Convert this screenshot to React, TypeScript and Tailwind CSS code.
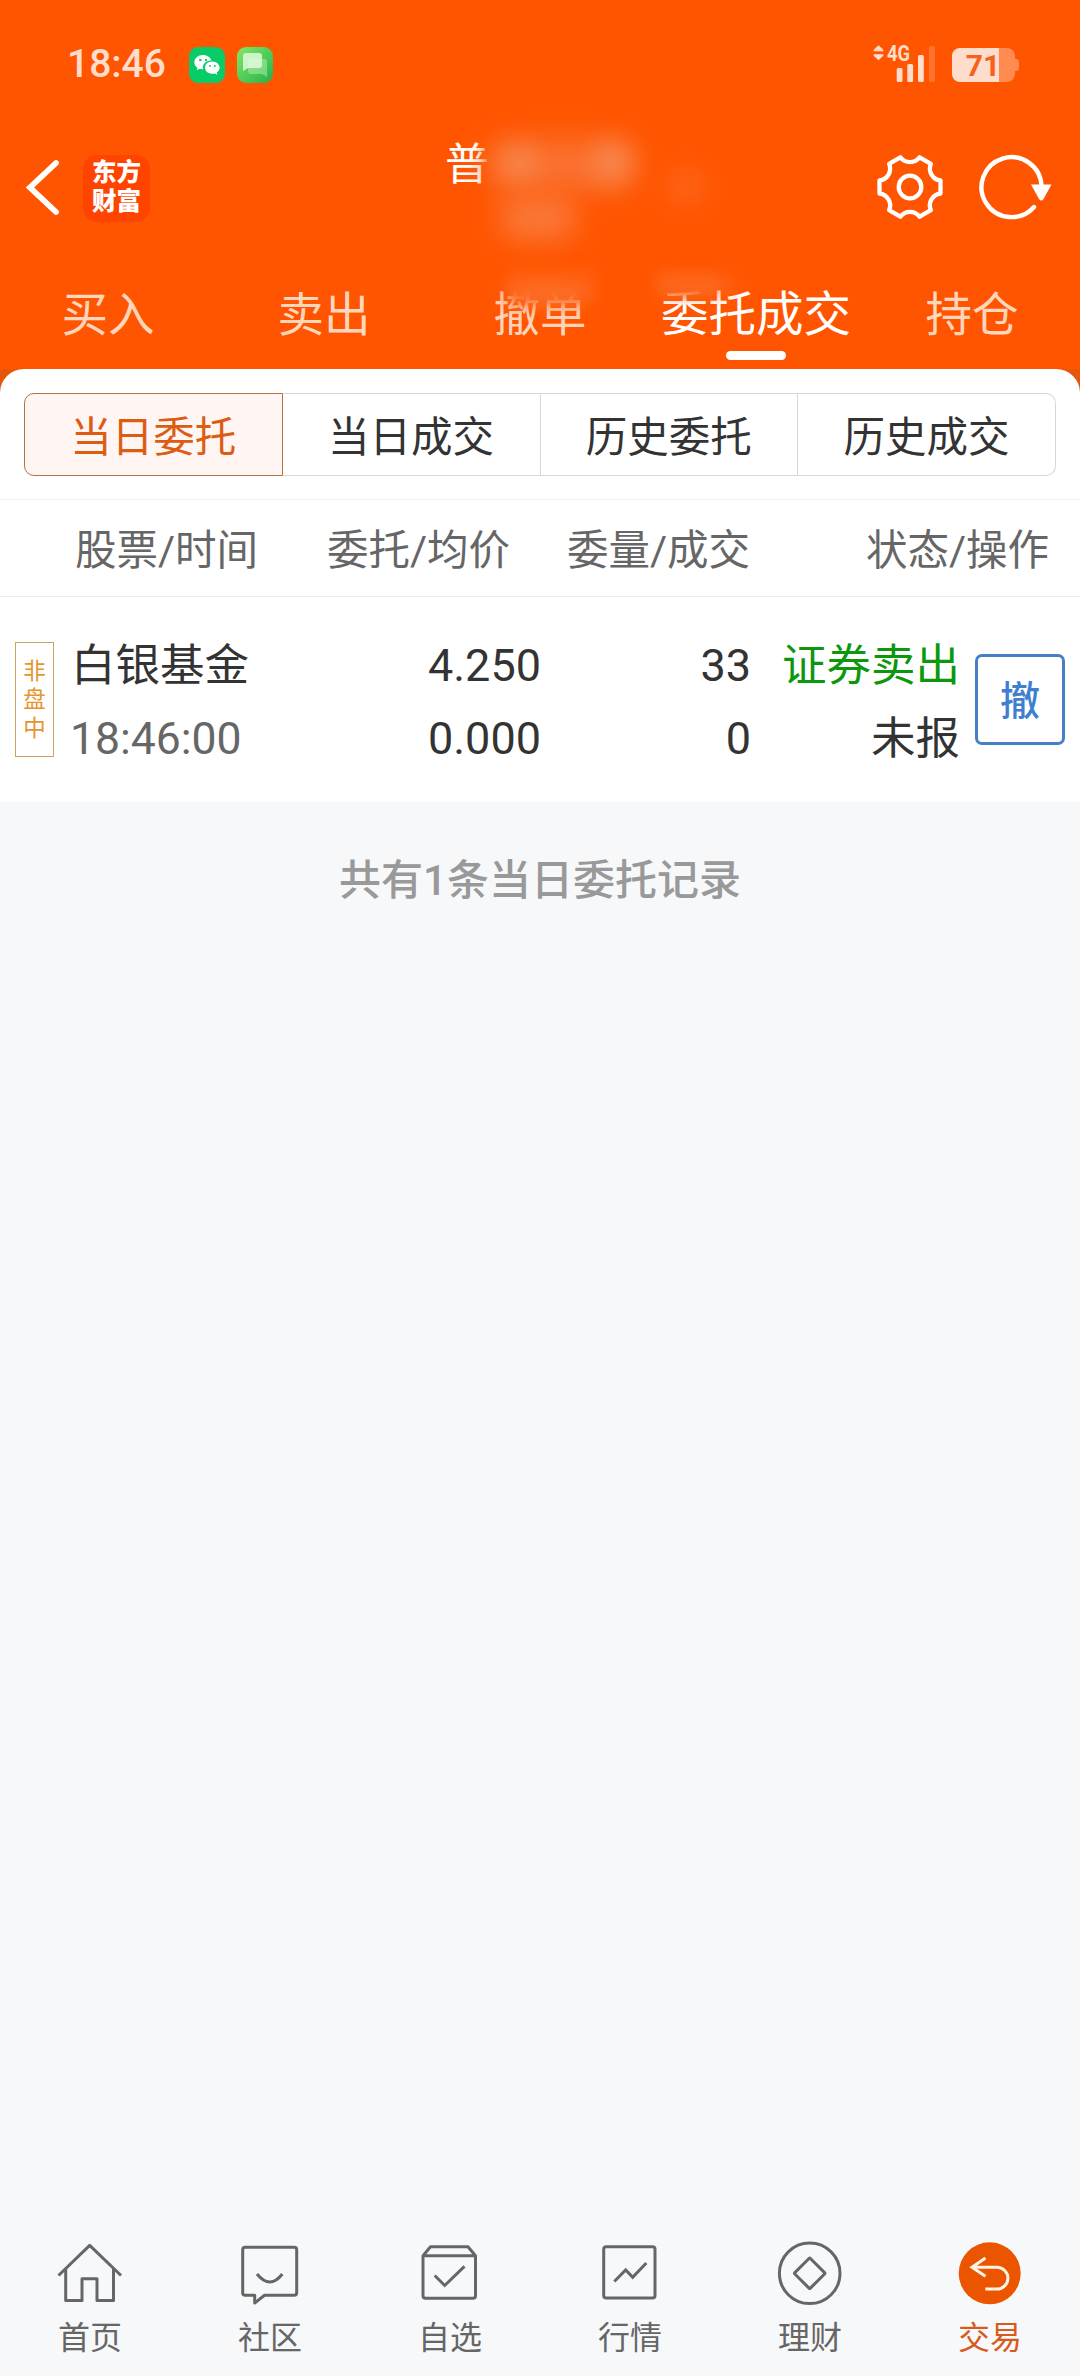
import type { ReactNode } from 'react';

const GEAR_PATH = (() => {
  const cx = 36;
  const cy = 36;
  const r = 31.2;
  const pt = (deg: number) => {
    const a = (deg * Math.PI) / 180;
    return `${(cx + r * Math.cos(a)).toFixed(2)} ${(cy + r * Math.sin(a)).toFixed(2)}`;
  };
  let d = `M${pt(-12)}`;
  for (let k = 0; k < 6; k++) {
    d += ` L${pt(k * 60 + 12)} A12 12 0 0 0 ${pt(k * 60 + 48)}`;
  }
  return d + 'Z';
})();

function StatusBar() {
  return (
    <div className="flex h-[128px] items-start pl-[67px] pr-[61px]">
      <div className="mt-[40px] w-[122px] text-[39px] leading-[48px] font-medium text-[#ffddcc]">18:46</div>
      <svg className="mt-[47px] h-[36px] w-[36px]" viewBox="0 0 36 36">
        <rect width="36" height="36" rx="9" fill="#07cc68" />
        <path d="M14 8c-5 0-8.700 3.300-8.700 7.300 0 2.300 1.200 4.200 3.200 5.500l-.8 2.500 3-1.500c1.100.3 2.200.5 3.500.4-1.300-5 3-8.800 8.200-8.600C21.600 10.300 18.200 8 14 8z" fill="#fff" />
        <path d="M23.300 14.400c-4.300 0-7.300 2.800-7.300 6.200s3 6.200 7.300 6.200c.9 0 1.800-.1 2.600-.4l2.400 1.300-.6-2.100c1.800-1.200 2.900-2.900 2.900-5 0-3.400-3.100-6.200-7.300-6.200z" fill="#fff" />
        <g fill="#07cc68">
          <circle cx="11.300" cy="13" r="1.200" />
          <circle cx="17" cy="13" r="1.200" />
          <circle cx="21" cy="19" r="1" />
          <circle cx="25.800" cy="19" r="1" />
        </g>
      </svg>
      <svg className="mt-[47px] ml-[12px] h-[36px] w-[36px]" viewBox="0 0 36 36">
        <defs>
          <linearGradient id="msg" x1="0" y1="0" x2="1" y2="1">
            <stop offset="0" stopColor="#84e868" />
            <stop offset="1" stopColor="#25b04c" />
          </linearGradient>
        </defs>
        <rect width="36" height="36" rx="9" fill="url(#msg)" />
        <path d="M14 12h13a3 3 0 0 1 3 3v15l-5-3H14a3 3 0 0 1-3-3v-9a3 3 0 0 1 3-3z" fill="#b5f0b0" opacity=".5" />
        <path d="M9 6h13a3 3 0 0 1 3 3v9a3 3 0 0 1-3 3H11l-5 3V9a3 3 0 0 1 3-3z" fill="#e4fbe0" opacity=".82" />
      </svg>
      <div className="flex-1" />
      <svg className="mt-[42px] h-[42px] w-[64px]" viewBox="873 42 64 42">
        <g fill="#ffddcc">
          <path d="M878.500 45.200l4.800 4.600h-9.600zM878.500 60.300l4.800-4.600h-9.600z" />
          <rect x="873.700" y="49.500" width="9.600" height="1.800" />
          <rect x="873.700" y="54.200" width="9.600" height="1.800" />
          <rect x="896.700" y="68" width="5.800" height="14" rx="1.500" />
          <rect x="907.300" y="64" width="5.800" height="18" rx="1.500" />
          <rect x="918" y="55" width="5.800" height="27" rx="1.500" />
          <rect x="929" y="46" width="5.800" height="36" rx="1.500" opacity=".22" />
        </g>
        <text x="887" y="61" fontSize="21.500" fontWeight="700" fill="#ffddcc" fontFamily="Roboto, sans-serif" textLength="23" lengthAdjust="spacingAndGlyphs">4G</text>
      </svg>
      <div className="mt-[48px] ml-[15px] flex items-center">
        <div className="flex h-[34px] w-[63px] items-center justify-center rounded-[8px] bg-linear-to-r from-[#ffddcc] from-75% to-[#ff8b50] to-75% pt-[2px] pr-[1px] text-[30px] leading-[32px] font-bold text-[#f4621c]">
          71
        </div>
        <div className="h-[12px] w-[4px] rounded-r-[3px] bg-[#ff8b50]" />
      </div>
    </div>
  );
}

function TitleBar() {
  return (
    <div className="flex h-[120px] items-center">
      <svg className="ml-[24px] h-[60px] w-[36px]" viewBox="24 158 36 60">
        <path d="M56 163L30 187.500L56 212" fill="none" stroke="#fff" strokeWidth="5.800" strokeLinecap="round" strokeLinejoin="miter" />
      </svg>
      <div className="ml-[23px] flex h-[67px] w-[67px] flex-col items-center justify-center rounded-[14px] bg-[#ff4400] text-[24.500px] leading-[29px] font-black text-white">
        <span className="-mt-[2px]">东方</span>
        <span>财富</span>
      </div>
      <div className="mt-[-46px] ml-[295px] text-[44px] leading-[50px] font-normal text-white">普</div>
      <div className="flex-1" />
      <svg className="-mt-[2px] h-[72px] w-[72px]" viewBox="0 0 72 72" fill="none" stroke="#fff">
        <path d={GEAR_PATH} strokeWidth="4.300" strokeLinejoin="round" />
        <circle cx="36" cy="36" r="11.300" strokeWidth="4.300" />
      </svg>
      <svg className="mr-[24px] ml-[30px] h-[72px] w-[80px]" viewBox="975 152 80 72">
        <path d="M1033 207A30 30 0 1 1 1040.500 186" fill="none" stroke="#fff" strokeWidth="4.400" strokeLinecap="round" />
        <path d="M1030 184.500h20.500l-8 14.500q-2.200 3-4.500 0z" fill="#fff" />
      </svg>
    </div>
  );
}

const TABS = ['买入', '卖出', '撤单', '委托成交', '持仓'];

function Header() {
  return (
    <header className="relative h-[369px] shrink-0 overflow-hidden bg-[#ff5500]">
      <StatusBar />
      <TitleBar />
      <nav className="flex h-[121px]">
        {TABS.map((t, i) => (
          <div key={t} className="flex w-[216px] flex-col items-center">
            <div className={i === 3 ? 'mt-[37px] text-[47.500px] leading-[60px] text-white' : 'mt-[37px] text-[46.500px] leading-[60px] text-[#ffd5bb]'}>
              {t}
            </div>
            {i === 3 && <div className="mt-[6px] h-[9px] w-[60px] rounded-full bg-white" />}
          </div>
        ))}
      </nav>
      {/* privacy smudges over the account name */}
      <div className="absolute top-[130px] left-[486px] h-[60px] w-[30px] bg-[#ff5500] blur-[5px]" />
      <div className="absolute top-[266px] left-[508px] h-[36px] w-[90px] bg-[#ff5b0a] blur-[6px]" />
      <div className="absolute top-[270px] left-[655px] h-[26px] w-[60px] bg-[#ff5b0a] blur-[5px]" />
      <div className="absolute top-[141px] left-[490px] h-[48px] w-[142px] rounded-[16px] bg-[#fa7434] blur-[16px]" />
      <div className="absolute top-[144px] left-[498px] h-[38px] w-[40px] rounded-full bg-[#f6915c] opacity-60 blur-[12px]" />
      <div className="absolute top-[141px] left-[592px] h-[42px] w-[42px] rounded-full bg-[#f6915c] opacity-65 blur-[12px]" />
      <div className="absolute top-[196px] left-[500px] h-[44px] w-[76px] rounded-[18px] bg-[#fa7838] blur-[14px]" />
      <div className="absolute top-[166px] left-[664px] h-[42px] w-[44px] rounded-full bg-[#fd6a22] opacity-60 blur-[12px]" />
      <div className="absolute top-[284px] left-[508px] h-[20px] w-[78px] bg-[#fb7838] opacity-80 blur-[10px]" />
      <div className="absolute top-[278px] left-[660px] h-[16px] w-[72px] bg-[#fb7838] opacity-60 blur-[9px]" />
    </header>
  );
}

function Segments() {
  const base = 'flex flex-1 items-center justify-center border border-[#d5d8d8] pt-[7px] text-[#333]';
  return (
    <div className="flex h-[131px] border-b border-[#f3f3f4] px-[24px] pt-[24px] pb-[23px] text-[41.500px]">
      <div className="flex flex-1 items-center justify-center rounded-l-[10px] border border-[#b8703f] bg-[#fff6f3] pt-[7px] text-[#dc5c14]">当日委托</div>
      <div className={base + ' border-l-0'}>当日成交</div>
      <div className={base + ' border-l-0'}>历史委托</div>
      <div className={base + ' rounded-r-[10px] border-l-0'}>历史成交</div>
    </div>
  );
}

function Orders() {
  return (
    <>
      <div className="flex h-[97px] items-center border-b border-[#ededee] pt-[7px] text-[41.500px] text-[#666]">
        <div className="w-[258px] text-right">股票/时间</div>
        <div className="w-[252px] text-right">委托/均价</div>
        <div className="w-[240px] text-right">委量/成交</div>
        <div className="w-[299px] text-right">状态/操作</div>
      </div>
      <div className="flex h-[205px] items-center text-[45px] leading-[73px] text-[#333]">
        <div className="ml-[15px] flex h-[115px] w-[39px] flex-col items-center justify-center border border-[#cba55c] text-[22.500px] leading-[28.500px] text-[#e5952f]">
          <span>非</span>
          <span>盘</span>
          <span>中</span>
        </div>
        <div className="ml-[17px] w-[220px] pt-[7px] text-[44.500px]">
          <div>白银基金</div>
          <div className="-ml-[1px] text-[#666]">18:46:00</div>
        </div>
        <div className="w-[250px] pt-[4px] text-right">
          <div>4.250</div>
          <div>0.000</div>
        </div>
        <div className="w-[210px] pt-[4px] text-right">
          <div>33</div>
          <div>0</div>
        </div>
        <div className="w-[209px] pt-[7px] text-right text-[44.500px]">
          <div className="text-[#0c970c]">证券卖出</div>
          <div>未报</div>
        </div>
        <div className="ml-[15px] flex h-[91px] w-[90px] items-center justify-center rounded-[7px] border-[3px] border-[#4380c8] pt-[3px] text-[40px] font-medium text-[#3f7fd0]">撤</div>
      </div>
    </>
  );
}

function Icon({ children }: { children: ReactNode }) {
  return (
    <svg className="h-[72px] w-[72px]" viewBox="0 0 72 72" fill="none" stroke="#666" strokeWidth="3" strokeLinejoin="round">
      {children}
    </svg>
  );
}

const NAV: { label: string; icon: ReactNode; active?: boolean }[] = [
  {
    label: '首页',
    icon: (
      <>
        <path d="M4.500 37.500L35.700 7.300L67 37.500" />
        <path d="M11.700 31v31.500H28V40.700h15v21.800h16.500V31" />
      </>
    ),
  },
  {
    label: '社区',
    icon: (
      <>
        <path d="M11.200 9.300h49a2.500 2.500 0 0 1 2.500 2.500v43a2.500 2.500 0 0 1-2.500 2.500H30.500L20.700 65v-7.700h-9.500a2.500 2.500 0 0 1-2.500-2.500v-43a2.500 2.500 0 0 1 2.500-2.500z" />
        <path d="M23 36q13 16 25.300 0" />
      </>
    ),
  },
  {
    label: '自选',
    icon: (
      <>
        <path d="M9 17.700h52.500v40a2.500 2.500 0 0 1-2.500 2.500H11.500a2.500 2.500 0 0 1-2.500-2.500zL16.500 8.800h37.500l7.500 8.900" />
        <path d="M20.700 37.500l10 10L50.500 28.300" strokeLinejoin="miter" />
      </>
    ),
  },
  {
    label: '行情',
    icon: (
      <>
        <rect x="9.700" y="8.800" width="51.300" height="51.300" rx="2.500" />
        <path d="M20.300 43.500L31.700 32l7 7.300L52.300 25" strokeLinejoin="miter" />
      </>
    ),
  },
  {
    label: '理财',
    icon: (
      <>
        <circle cx="35.700" cy="35.300" r="30.300" />
        <rect x="24.700" y="24.300" width="22" height="22" rx="1" transform="rotate(45 35.700 35.300)" />
      </>
    ),
  },
  {
    label: '交易',
    active: true,
    icon: (
      <>
        <circle cx="35.700" cy="35.300" r="31" fill="#eb5500" stroke="none" />
        <path d="M31.500 20L18 29.300l13.500 9M18 29.300h25a10.900 10.900 0 0 1 0 21.800H31.300" stroke="#fff3e6" strokeLinejoin="miter" />
      </>
    ),
  },
];

function BottomNav() {
  return (
    <nav className="flex h-[138px] shrink-0">
      {NAV.map((n) => (
        <div key={n.label} className="flex w-[180px] flex-col items-center">
          <Icon>{n.icon}</Icon>
          <div className={n.active ? 'mt-[8px] text-[32px] leading-[40px] text-[#d95a1c]' : 'mt-[8px] text-[32px] leading-[40px] text-[#666]'}>{n.label}</div>
        </div>
      ))}
    </nav>
  );
}

export default function App() {
  return (
    <div className="flex h-[2376px] w-[1080px] flex-col overflow-hidden bg-[#f7f8fa] font-[Roboto,'Noto_Sans_CJK_SC',sans-serif]">
      <Header />
      <div className="bg-[linear-gradient(#e65509_24px,transparent_24px)]">
        <main className="rounded-t-[24px] bg-white">
          <Segments />
          <Orders />
        </main>
      </div>
      <p className="mt-[49px] flex-1 text-center text-[42px] leading-[60px] font-medium text-[#999]">共有1条当日委托记录</p>
      <BottomNav />
    </div>
  );
}
